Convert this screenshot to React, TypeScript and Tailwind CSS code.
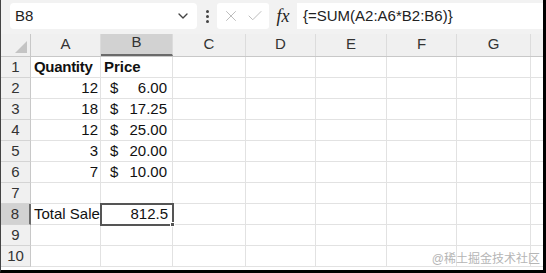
import { ChevronDown, X, Check } from 'lucide-react'

const cols = [
  { key: 'A', w: 'w-[70px]' },
  { key: 'B', w: 'w-[72px]' },
  { key: 'C', w: 'w-[73px]' },
  { key: 'D', w: 'w-[70px]' },
  { key: 'E', w: 'w-[71px]' },
  { key: 'F', w: 'w-[70px]' },
  { key: 'G', w: 'w-[74px]' },
  { key: '', w: 'w-[13px]' },
]

const data: { qty?: string; price?: string; label?: string; bold?: boolean }[] = [
  { label: 'Quantity', price: 'Price', bold: true },
  { qty: '12', price: '6.00' },
  { qty: '18', price: '17.25' },
  { qty: '12', price: '25.00' },
  { qty: '3', price: '20.00' },
  { qty: '7', price: '10.00' },
  {},
  { label: 'Total Sales' },
  {},
  {},
]

function Row({ n, row }: { n: number; row: (typeof data)[number] }) {
  const selected = n === 8
  return (
    <div className="flex h-[21px] shrink-0">
      <div
        className={
          'w-[30px] shrink-0 flex items-center justify-center text-[15px] text-[#333] border-b border-[#d4d4d4] ' +
          (selected ? 'bg-[#d2d2d2] border-r-2 border-r-[#6a6a6a]' : 'bg-[#f0f0f0] border-r border-r-[#c8c8c8]')
        }
      >
        {n}
      </div>
      {cols.map((c, i) => {
        const base = `${c.w} shrink-0 h-full border-b border-r border-[#e2e2e2] text-[15px] text-[#111] flex items-center relative`
        if (i === 0) {
          if (row.label) {
            return (
              <div key={i} className={base + ' overflow-hidden whitespace-nowrap px-[3px]'}>
                <span className={row.bold ? 'font-bold tracking-[-0.3px]' : ''}>{row.label}</span>
              </div>
            )
          }
          return (
            <div key={i} className={base + ' justify-end px-[2px]'}>
              {row.qty}
            </div>
          )
        }
        if (i === 1) {
          if (selected) {
            return (
              <div key={i} className={base + ' justify-end px-[4px] outline-2 outline-[#555] -outline-offset-1 z-10 bg-white'}>
                812.5
                <span className="absolute -right-[3px] -bottom-[3px] w-[5px] h-[5px] bg-[#555] border border-white" />
              </div>
            )
          }
          if (row.bold) {
            return (
              <div key={i} className={base + ' px-[3px] font-bold'}>
                {row.price}
              </div>
            )
          }
          if (row.price) {
            return (
              <div key={i} className={base + ' justify-between pl-[9px] pr-[5px]'}>
                <span>$</span>
                <span>{row.price}</span>
              </div>
            )
          }
        }
        return <div key={i} className={base} />
      })}
    </div>
  )
}

export default function App() {
  return (
    <div
      className="w-[546px] h-[273px] overflow-hidden bg-white flex flex-col border-r-[3px] border-b-[3px] border-black border-l border-l-[#444]"
      style={{ fontFamily: '"Liberation Sans", "Noto Sans CJK SC", sans-serif' }}
    >
      {/* formula bar */}
      <div className="h-[34px] shrink-0 bg-[#f2f2f2] flex items-start pt-[3px] pl-[9px]">
        <div className="w-[187px] h-[26px] bg-white rounded-[4px] flex items-center justify-between pl-[5px] pr-[6px]">
          <span className="text-[15px] text-[#222]">B8</span>
          <ChevronDown size={16} strokeWidth={2} className="text-[#444]" />
        </div>
        <div className="w-[20px] h-[26px] flex flex-col items-center justify-center gap-[2px]">
          <span className="w-[3px] h-[3px] rounded-full bg-[#444]" />
          <span className="w-[3px] h-[3px] rounded-full bg-[#444]" />
          <span className="w-[3px] h-[3px] rounded-full bg-[#444]" />
        </div>
        <div className="w-[52px] h-[26px] bg-white rounded-[3px] flex items-center justify-around px-[2px]">
          <X size={18} strokeWidth={1.3} className="text-[#bbb]" />
          <Check size={18} strokeWidth={1.3} className="text-[#bbb]" />
        </div>
        <div className="w-[28px] h-[26px] flex items-center justify-center">
          <span className="text-[18px] italic text-[#222]" style={{ fontFamily: '"Liberation Serif", serif' }}>
            fx
          </span>
        </div>
        <div className="flex-1 h-[26px] bg-white flex items-center pl-[6px] text-[15px] text-[#222]">
          {'{=SUM(A2:A6*B2:B6)}'}
        </div>
      </div>

      {/* column headers */}
      <div className="flex h-[23px] shrink-0 bg-[#f0f0f0] border-b border-[#c8c8c8]">
        <div className="w-[30px] shrink-0 border-r border-[#c8c8c8] relative">
          <svg className="absolute right-[3px] bottom-[3px]" width="12" height="12" viewBox="0 0 12 12">
            <polygon points="12,0 12,12 0,12" fill="#c4c4c4" />
          </svg>
        </div>
        {cols.map((c, i) => (
          <div
            key={i}
            className={
              `${c.w} shrink-0 flex items-end justify-center pb-[1px] text-[15px] text-[#333] border-r border-[#dcdcdc] ` +
              (c.key === 'B' ? 'bg-[#d2d2d2] border-b-2 border-b-[#6a6a6a]' : '')
            }
          >
            {c.key}
          </div>
        ))}
      </div>

      {/* rows */}
      <div className="relative flex-1 flex flex-col">
        {data.map((row, i) => (
          <Row key={i} n={i + 1} row={row} />
        ))}
        <span className="absolute right-[3px] bottom-[2px] text-[12px] text-[#b5b5b5]">@稀土掘金技术社区</span>
      </div>
    </div>
  )
}
